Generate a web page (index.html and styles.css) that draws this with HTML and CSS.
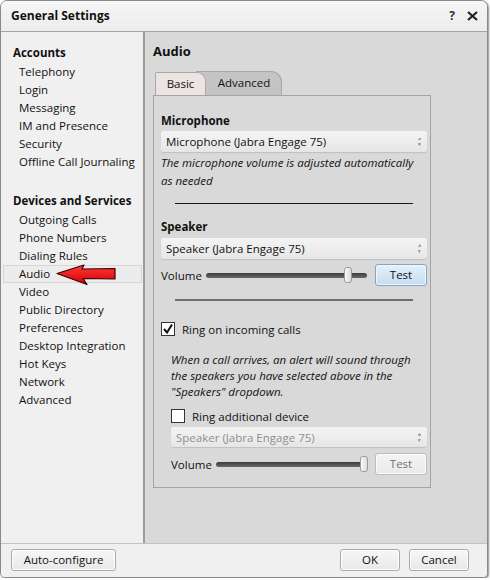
FILE: index.html
```html
<!DOCTYPE html>
<html lang="en">
<head>
  <meta charset="UTF-8" />
  <title>General Settings</title>
  <link rel="stylesheet" href="styles.css">
</head>
<body>

  <div class="dialog">
    <div class="titlebar">
      <span class="title">General Settings</span>
      <span class="help">?</span>
      <svg class="close" width="11" height="10" viewBox="0 0 11 10">
        <path d="M1 1 L10 9 M10 1 L1 9" stroke="#222" stroke-width="2.2" fill="none"/>
      </svg>
    </div>

    <div class="main">
      <div class="nav">
        <div class="nav-head">Accounts</div>
        <div class="nav-item">Telephony</div>
        <div class="nav-item">Login</div>
        <div class="nav-item">Messaging</div>
        <div class="nav-item">IM and Presence</div>
        <div class="nav-item">Security</div>
        <div class="nav-item">Offline Call Journaling</div>

        <div class="nav-head second">Devices and Services</div>
        <div class="nav-item">Outgoing Calls</div>
        <div class="nav-item">Phone Numbers</div>
        <div class="nav-item">Dialing Rules</div>
        <div class="nav-item selected">Audio
          <svg class="pointer" width="64" height="24" viewBox="0 0 64 24">
            <defs>
              <linearGradient id="red" x1="0" y1="0" x2="0" y2="1">
                <stop offset="0" stop-color="#ff3b3b"/>
                <stop offset="1" stop-color="#d40000"/>
              </linearGradient>
            </defs>
            <path d="M2 10.5 L29 2 L27 6 L60 5.5 L60 16 L28 15.5 L32 21.5 Z" fill="url(#red)" stroke="#3a0000" stroke-width="1.2" stroke-linejoin="round"/>
          </svg>
        </div>
        <div class="nav-item">Video</div>
        <div class="nav-item">Public Directory</div>
        <div class="nav-item">Preferences</div>
        <div class="nav-item">Desktop Integration</div>
        <div class="nav-item">Hot Keys</div>
        <div class="nav-item">Network</div>
        <div class="nav-item">Advanced</div>
      </div>

      <div class="content">
        <div class="page-title">Audio</div>

        <div class="tabs">
          <div class="tab basic">Basic</div>
          <div class="tab advanced">Advanced</div>
        </div>

        <div class="tab-panel">
          <div class="grp-title">Microphone</div>
          <div class="select">
            <span>Microphone (Jabra Engage 75)</span>
            <span class="spin"></span>
          </div>
          <div class="note">The microphone volume is adjusted automatically as needed</div>

          <div class="sep"></div>

          <div class="grp-title speaker">Speaker</div>
          <div class="select spk">
            <span>Speaker (Jabra Engage 75)</span>
            <span class="spin"></span>
          </div>
          <div class="vol-row">
            <span class="vol-label">Volume</span>
            <div class="slider">
              <div class="thumb" style="left: 138px;"></div>
            </div>
            <div class="btn test">Test</div>
          </div>

          <div class="sep thick"></div>

          <div class="check-row">
            <span class="check on">
              <svg width="12" height="12" viewBox="0 0 12 12"><path d="M2 6 L5 9.5 L10 1.5" stroke="#111" stroke-width="2" fill="none"/></svg>
            </span>
            <span>Ring on incoming calls</span>
          </div>
          <div class="note ring">When a call arrives, an alert will sound through the speakers you have selected above in the "Speakers" dropdown.</div>

          <div class="check-row extra">
            <span class="check"></span>
            <span>Ring additional device</span>
          </div>
          <div class="select disabled">
            <span>Speaker (Jabra Engage 75)</span>
            <span class="spin"></span>
          </div>
          <div class="vol-row extra-vol">
            <span class="vol-label">Volume</span>
            <div class="slider">
              <div class="thumb" style="left: calc(100% - 7px);"></div>
            </div>
            <div class="btn test off">Test</div>
          </div>
        </div>
      </div>
    </div>

    <div class="footer">
      <div class="btn auto">Auto-configure</div>
      <div class="spacer"></div>
      <div class="btn wide">OK</div>
      <div class="btn wide">Cancel</div>
    </div>
  </div>

</body>
</html>
```

FILE: styles.css
```css
* {
  box-sizing: border-box;
}

body {
  margin: 0;
  background: #fff;
  font-family: 'Open Sans', 'Noto Sans', sans-serif;
  font-size: 11.5px;
  color: #111;
}

.dialog {
  width: 488px;
  height: 578px;
  border: 1px solid #8a8a8a;
  border-radius: 7px 7px 5px 5px;
  box-shadow: 1px 1px 2px rgba(0, 0, 0, 0.45);
  background: #f0f0f0;
  display: flex;
  flex-direction: column;
  overflow: hidden;
}

/* title bar */

.titlebar {
  height: 31px;
  flex: none;
  display: flex;
  align-items: center;
  padding: 0 9px 1px 10px;
  background: linear-gradient(#f6f6f6, #ececec);
  border-bottom: 1px solid #a4a4a4;
}

.title {
  font-weight: bold;
  font-size: 12px;
  flex: 1;
}

.help {
  font-weight: bold;
  font-size: 12px;
  color: #333;
  margin-right: 12px;
}

.close {
  display: block;
}

/* body */

.main {
  flex: 1;
  display: flex;
  min-height: 0;
}

.nav {
  width: 144px;
  flex: none;
  background: #f0f0f0;
  border-right: 2px solid #9c9c9c;
  padding: 11px 1px 0 2px;
}

.nav-head {
  font-weight: bold;
  line-height: 20px;
  padding-left: 10px;
}

.nav-head.second {
  margin-top: 20px;
}

.nav-item {
  position: relative;
  line-height: 16px;
  padding-left: 15px;
  border: 1px solid transparent;
}

.nav-item.selected {
  border-color: #d6d6d6;
  background: #ececec;
}

.pointer {
  position: absolute;
  left: 51px;
  top: -3px;
}

.content {
  flex: 1;
  background: #d9d9d9;
  padding: 10px 0 0 8px;
}

.page-title {
  font-weight: bold;
  font-size: 13px;
  line-height: 18px;
}

.tabs {
  display: flex;
  height: 24px;
  margin-top: 11px;
  padding-left: 2px;
  align-items: flex-end;
}

.tab {
  border: 1px solid #a8a8a8;
  border-bottom: none;
  line-height: 22px;
  text-align: center;
}

.tab.basic {
  position: relative;
  z-index: 1;
  width: 51px;
  height: 23px;
  background: #ebe4e2;
  border-radius: 2px 9px 0 0;
}

.tab.advanced {
  width: 86px;
  height: 24px;
  margin-left: -10px;
  padding-left: 10px;
  background: #c4c4c4;
  border-radius: 0 11px 0 0;
}

.tab-panel {
  width: 278px;
  border: 1px solid #a4a4a4;
  padding: 16px 3px 12px 7px;
}

.grp-title {
  font-weight: bold;
  line-height: 18px;
}

.grp-title.speaker {
  margin-top: 14px;
}

.select {
  height: 21px;
  margin-top: 1px;
  display: flex;
  align-items: center;
  padding: 0 5px;
  border-radius: 3px;
  background: linear-gradient(#f4f4f4, #e6e6e6);
  box-shadow: 0 1px 1px rgba(0, 0, 0, 0.12);
}

.select span:first-child {
  flex: 1;
}

.select.spk {
  margin-top: 2px;
}

.select.disabled {
  height: 20px;
  margin: 2px 0 0 10px;
  color: #8f8f8f;
}

.spin {
  width: 5px;
  height: 9px;
  background:
    linear-gradient(to bottom right, transparent 50%, #a8a8a8 50%) 0 0 / 3px 3px no-repeat,
    linear-gradient(to bottom left, transparent 50%, #a8a8a8 50%) 2px 0 / 3px 3px no-repeat,
    linear-gradient(to top right, transparent 50%, #a8a8a8 50%) 0 6px / 3px 3px no-repeat,
    linear-gradient(to top left, transparent 50%, #a8a8a8 50%) 2px 6px / 3px 3px no-repeat;
}

.note {
  font-style: italic;
  line-height: 18px;
  margin-top: 2px;
  padding-right: 6px;
}

.note.ring {
  line-height: 16px;
  margin-top: 14px;
  padding-left: 10px;
}

.sep {
  height: 1px;
  margin: 13px 14px 0;
  background: #1a1a1a;
}

.sep.thick {
  height: 2px;
  background: #6e6e6e;
}

.vol-row {
  display: flex;
  align-items: center;
  height: 22px;
  margin-top: 5px;
}

.vol-row.extra-vol {
  margin-top: 6px;
  padding-left: 10px;
}

.vol-label {
  width: 45px;
  flex: none;
}

.slider {
  position: relative;
  flex: 1;
  height: 5px;
  margin-right: 8px;
  border-radius: 3px;
  background: linear-gradient(#3c3c3c, #6a6a6a);
}

.thumb {
  position: absolute;
  top: -6px;
  width: 8px;
  height: 16px;
  border: 1px solid #9a9a9a;
  border-radius: 3px;
  background: linear-gradient(to right, #fafafa, #dcdcdc);
}

.btn {
  height: 22px;
  line-height: 20px;
  text-align: center;
  border: 1px solid #a9a9a9;
  border-radius: 3px;
  background: linear-gradient(#f7f7f7, #e8e8e8);
  box-shadow: inset 0 0 0 1px #fff;
}

.btn.test {
  width: 52px;
  flex: none;
  border-color: #7fa6c8;
  background: linear-gradient(#e6f1fa, #c4ddf1);
  box-shadow: inset 0 0 0 1px #eef6fc;
}

.btn.test.off {
  border-color: #bdbdbd;
  background: linear-gradient(#f4f4f4, #e9e9e9);
  color: #6f6f6f;
  box-shadow: inset 0 0 0 1px #fbfbfb;
}

.check-row {
  display: flex;
  align-items: center;
  height: 18px;
  margin-top: 19px;
  gap: 7px;
}

.check-row.extra {
  margin-top: 7px;
  padding-left: 10px;
}

.check {
  width: 14px;
  height: 14px;
  border: 1px solid #333;
  background: #fff;
  display: flex;
  align-items: center;
  justify-content: center;
}

/* footer */

.footer {
  height: 34px;
  flex: none;
  display: flex;
  gap: 9px;
  padding: 5px 18px 0 10px;
  border-top: 1px solid #c2c2c2;
  background: #f0f0f0;
}

.btn.auto {
  width: 105px;
}

.btn.wide {
  width: 60px;
}

.spacer {
  flex: 1;
}
```
